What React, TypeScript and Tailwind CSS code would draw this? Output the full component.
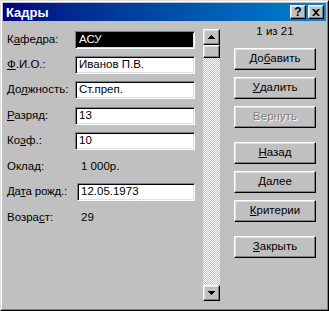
import React from 'react';

const raised =
  'border border-t-white border-l-white border-r-black border-b-black shadow-[inset_-1px_-1px_0_#808080,inset_1px_1px_0_#dfdfdf] bg-[#c0c0c0]';
const sunken =
  'border border-t-[#808080] border-l-[#808080] border-r-white border-b-white shadow-[inset_1px_1px_0_#000,inset_-1px_-1px_0_#dfdfdf]';

const fields: { label: React.ReactNode; value: string; kind: 'input' | 'text' | 'focus' }[] = [
  { label: <>К<u>а</u>федра:</>, value: 'АСУ', kind: 'focus' },
  { label: <><u>Ф</u>.И.О.:</>, value: 'Иванов П.В.', kind: 'input' },
  { label: <>До<u>л</u>жность:</>, value: 'Ст.преп.', kind: 'input' },
  { label: <><u>Р</u>азряд:</>, value: '13', kind: 'input' },
  { label: <>Ко<u>э</u>ф.:</>, value: '10', kind: 'input' },
  { label: <>Оклад:</>, value: '1 000р.', kind: 'text' },
  { label: <>Да<u>т</u>а рожд.:</>, value: '12.05.1973', kind: 'input' },
  { label: <>Возра<u>с</u>т:</>, value: '29', kind: 'text' },
];

const buttons: { label: React.ReactNode; mt: string; disabled?: boolean }[] = [
  { label: <>До<u>б</u>авить</>, mt: 'mt-[9px]' },
  { label: <><u>У</u>далить</>, mt: 'mt-[7px]' },
  { label: <>Вернуть</>, mt: 'mt-[7px]', disabled: true },
  { label: <><u>Н</u>азад</>, mt: 'mt-[14px]' },
  { label: <><u>Д</u>алее</>, mt: 'mt-[7px]' },
  { label: <><u>К</u>ритерии</>, mt: 'mt-[7px]' },
  { label: <><u>З</u>акрыть</>, mt: 'mt-[14px]' },
];

const Arrow = ({ down }: { down?: boolean }) => (
  <svg width="7" height="4" viewBox="0 0 7 4" className={down ? 'rotate-180' : ''}>
    <path d="M3 0h1v1h1v1h1v1h1v1H0V3h1V2h1V1h1z" fill="#000" />
  </svg>
);

export default function App() {
  return (
    <div
      className="w-[329px] h-[311px] bg-[#c0c0c0] border border-t-[#dfdfdf] border-l-[#dfdfdf] border-r-black border-b-black text-[11.5px] text-black select-none"
      style={{ fontFamily: '"Liberation Sans", Arial, sans-serif' }}
    >
      <div className="h-full border border-t-white border-l-white border-r-[#808080] border-b-[#808080] p-px flex flex-col">
        {/* Title bar */}
        <div className="h-[18px] flex items-center justify-between pl-[3px] pr-[2px] bg-gradient-to-r from-[#000080] to-[#1084d0]">
          <span className="text-white font-bold text-[13px] leading-none">Кадры</span>
          <div className="flex gap-[2px]">
            <div className={`${raised} w-[16px] h-[14px] flex items-center justify-center text-[12px] font-bold leading-none`}>?</div>
            <div className={`${raised} w-[16px] h-[14px] flex items-center justify-center`}>
              <svg width="8" height="7" viewBox="0 0 8 7">
                <path d="M0 0h2l2 2 2-2h2L5 3.5 8 7H6L4 5 2 7H0l3-3.5z" fill="#000" />
              </svg>
            </div>
          </div>
        </div>

        {/* Client */}
        <div className="flex-1 flex items-start pl-[4px]">
          <div className="mt-[10px] flex flex-col gap-[7px] w-[188px]">
            {fields.map((f, i) => (
              <div key={i} className={`flex items-center h-[18px] ${i === 3 || i === 5 || i === 7 ? 'mt-px' : ''}`}>
                <div className={`w-[68px] whitespace-nowrap ${i === 6 ? 'tracking-[-0.2px]' : ''}`}>{f.label}</div>
                {f.kind === 'text' ? (
                  <div className="pl-[6px]">{f.value}</div>
                ) : (
                  <div
                    className={`${sunken} h-[18px] flex items-center pl-[3px] ${
                      f.kind === 'focus' ? 'bg-black text-white' : 'bg-white'
                    } ${i === 6 ? 'ml-[2px] w-[118px]' : 'w-[120px]'}`}
                  >
                    {f.value}
                  </div>
                )}
              </div>
            ))}
          </div>

          {/* Scrollbar */}
          <div className="ml-[8px] mt-[8px] w-[17px] h-[272px] flex flex-col bg-[repeating-conic-gradient(#c0c0c0_0_25%,#ffffff_0_50%)] bg-size-[2px_2px]">
            <div className={`${raised} h-[16px] flex items-center justify-center`}>
              <Arrow />
            </div>
            <div className={`${raised} h-[13px]`} />
            <div className="flex-1" />
            <div className={`${raised} h-[16px] flex items-center justify-center`}>
              <Arrow down />
            </div>
          </div>

          {/* Buttons */}
          <div className="ml-[14px] mt-[4px] w-[82px] flex flex-col">
            <div className="h-[14px] flex items-center justify-center">1 из 21</div>
            {buttons.map((b, i) => (
              <div
                key={i}
                className={`${raised} ${b.mt} h-[22px] flex items-center justify-center ${
                  b.disabled ? 'text-[#808080] [text-shadow:1px_1px_0_#fff]' : ''
                }`}
              >
                {b.label}
              </div>
            ))}
          </div>
        </div>
      </div>
    </div>
  );
}
